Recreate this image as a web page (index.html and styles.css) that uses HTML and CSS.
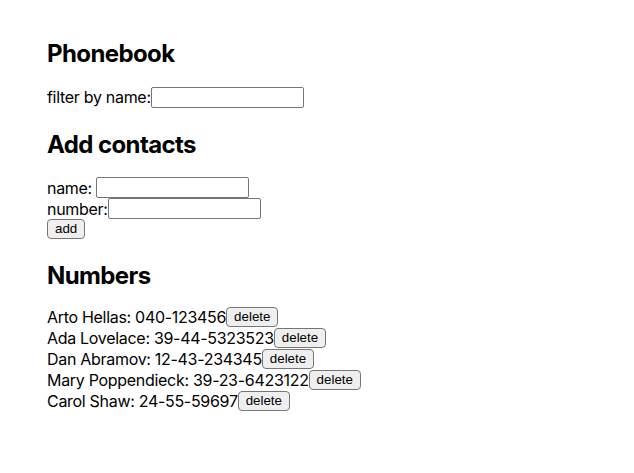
FILE: index.html
```html
<!DOCTYPE html>
<html>
<head>
<meta charset="utf-8">
<link rel="stylesheet" href="styles.css">
</head>
<body>
<div class="app">
  <h2 class="title">Phonebook</h2>
  <div class="row row-filter"><span>filter by name:</span><input class="field"></div>
  <h2 class="title">Add contacts</h2>
  <form class="form">
    <div class="row"><span>name:&nbsp;</span><input class="field"></div>
    <div class="row"><span>number:</span><input class="field"></div>
    <div class="row row-add"><button type="button" class="btn">add</button></div>
  </form>
  <h2 class="title title-list">Numbers</h2>
  <div class="row"><span>Arto Hellas: 040-123456</span><button class="btn">delete</button></div>
  <div class="row"><span>Ada Lovelace: 39-44-5323523</span><button class="btn">delete</button></div>
  <div class="row"><span>Dan Abramov: 12-43-234345</span><button class="btn">delete</button></div>
  <div class="row"><span>Mary Poppendieck: 39-23-6423122</span><button class="btn">delete</button></div>
  <div class="row"><span>Carol Shaw: 24-55-59697</span><button class="btn">delete</button></div>
</div>
</body>
</html>
```

FILE: styles.css
```css
body {
  margin: 0;
  padding: 17px 47px;
  font-family: Inter, "Liberation Sans", sans-serif;
  font-size: 16px;
  letter-spacing: -0.3px;
  color: #000;
  background: #fff;
}
.title {
  font-size: 24px;
  font-weight: 700;
  letter-spacing: -0.6px;
  line-height: 29px;
  margin: 20px 0 18px;
  padding-top: 2px;
}
.title-list {
  margin-bottom: 16px;
}
.form {
  margin: 0;
}
.row {
  display: flex;
  align-items: center;
  height: 21px;
  white-space: pre;
}
.row-filter {
  height: 22px;
}
.row-add {
  height: 20px;
}
.field {
  font-family: "Liberation Sans", Arial, sans-serif;
  font-size: 13.333px;
  letter-spacing: normal;
  width: 147px;
  height: 17px;
  padding: 1px 2px;
  border: 1px solid #767676;
  border-radius: 2px;
  box-sizing: content-box;
  margin: 0;
  background: #fff;
}
.btn {
  font-family: "Liberation Sans", Arial, sans-serif;
  font-size: 13.333px;
  letter-spacing: normal;
  line-height: 16px;
  height: 20px;
  padding: 1px 7px;
  border: 1px solid #767676;
  border-radius: 4px;
  background: #efefef;
  color: #000;
  margin: 0;
}
```
